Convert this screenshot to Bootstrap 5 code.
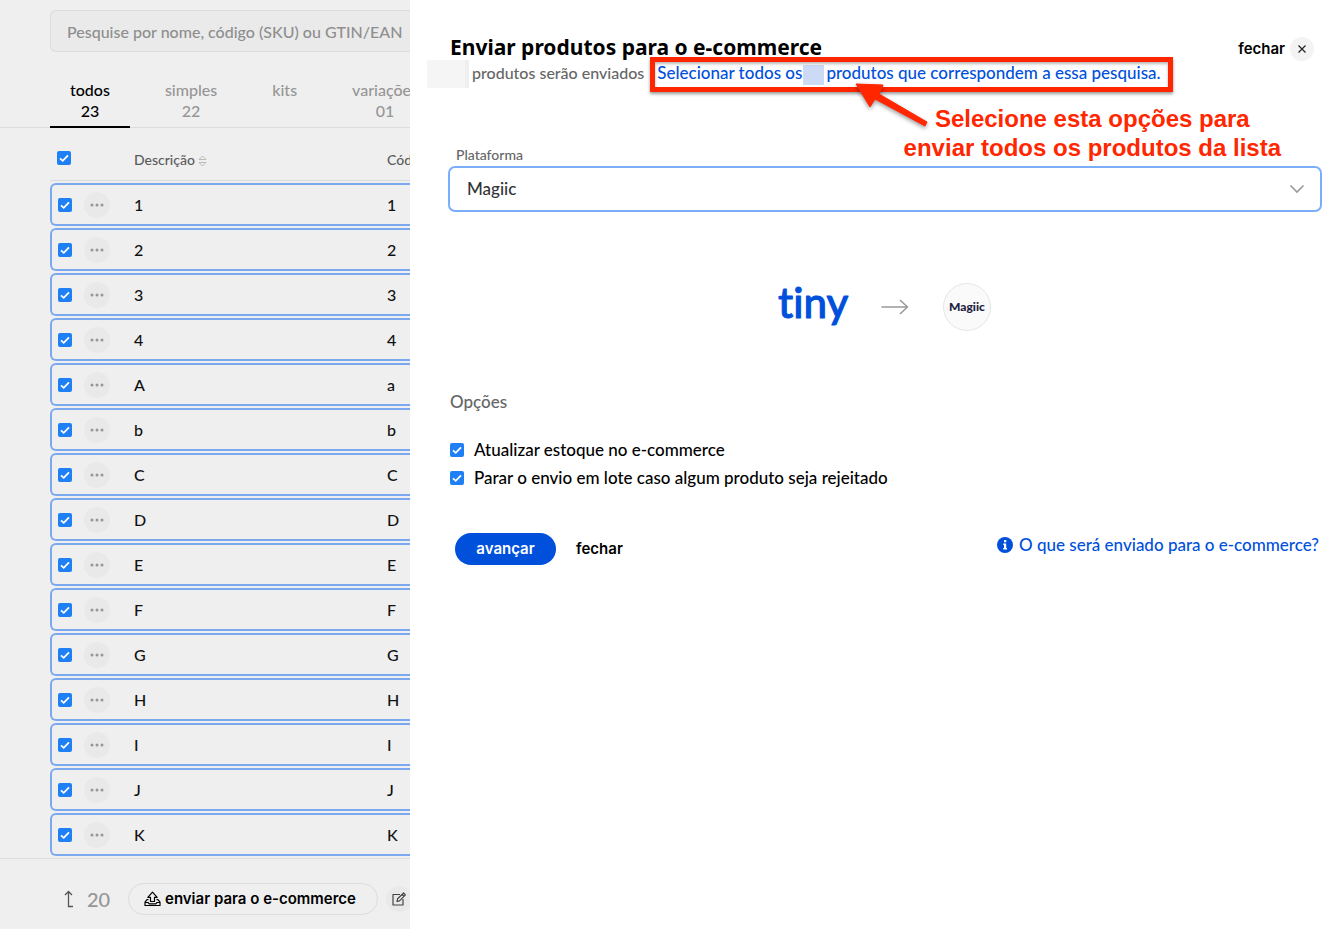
<!DOCTYPE html>
<html lang="pt-BR">
<head>
<meta charset="utf-8">
<meta name="viewport" content="width=device-width, initial-scale=1">
<title>Enviar produtos para o e-commerce</title>
<link href="https://cdn.jsdelivr.net/npm/bootstrap@5.3.0/dist/css/bootstrap.min.css" rel="stylesheet">
<style>
  body { font-family: Lato, "Open Sans", sans-serif; font-size: 17px; line-height: 24px; font-weight: 500; color: #000; }
  .app-shell { display: grid; grid-template-columns: 410fr 925fr; min-height: 100vh; }
  .brand-font { font-family: Inter, "Open Sans", sans-serif; font-weight: 600; font-size: 15px; line-height: 24px; }

  /* product list, behind the panel */
  .list-side { background: #efefef; overflow: hidden; white-space: nowrap; min-width: 0; }
  .search-area { padding: 10px 0 0 50px; }
  .search-box { height: 42px; padding: 0 0 0 16px; background: #eaeaea; border: 1px solid #dcdcdc; border-right: 0; border-radius: 6px 0 0 6px; font-size: 16px; font-weight: 500; }
  .search-box::placeholder { color: #8e8e8e; }
  .tab-strip { border-bottom: 1px solid #dcdcdc; padding-left: 50px; margin-top: 27px; gap: 15px; height: 49px; }
  .tab-strip .nav-link { color: #969696; font-size: 16px; line-height: 21px; padding: 0 20px; text-align: center; border-radius: 0; height: 49px; border-bottom: 2px solid transparent; }
  .tab-strip .nav-link.active { color: #000; border-bottom-color: #000; }

  .table-area { padding-left: 50px; }
  .product-table { table-layout: fixed; width: 100%; border-collapse: separate; border-spacing: 0 2px; font-size: 16px; }
  .product-table th { height: 51px; padding: 10px 0 0; border-bottom: 1px solid #dcdcdc; color: #5c5c5c; font-size: 14px; font-weight: 500; }
  .product-table td { height: 43px; padding: 0; border: solid #7ba9f0; border-width: 2px 0; color: #111; }
  .product-table td:first-child { border-left-width: 2px; border-radius: 6px 0 0 6px; padding-left: 6px; }
  .product-table th:first-child { padding: 6px 0 0 7px; }
  .col-check { width: 34px; } .col-menu { width: 50px; } .col-name { width: 253px; }

  .tick { appearance: none; flex: none; display: block; width: 14px; height: 14px; margin: 0; border-radius: 2px; background: #2080ff; }
  .tick:checked { background: #1f7ff5 url("data:image/svg+xml,%3Csvg xmlns='http://www.w3.org/2000/svg' viewBox='0 0 14 14'%3E%3Cpath d='M3 7.4l2.7 2.4L11 4.3' fill='none' stroke='%23fff' stroke-width='1.8'/%3E%3C/svg%3E"); }
  .round-btn { width: 26px; height: 26px; border: 0; border-radius: 50%; background: #e9e9e9; padding: 0; display: flex; align-items: center; justify-content: center; flex: none; }

  .action-bar { border-top: 1px solid #dcdcdc; padding: 24px 0 14px 62px; }
  .action-bar .round-btn { margin-left: 8px; }
  .selected-count { color: #969696; font-size: 20px; width: 41px; }
  .send-btn { height: 32px; width: 250px; border: 1px solid #dcdcdc; border-radius: 16px; background: transparent; padding: 0 6px 0 0; flex: none; }

  /* sending panel */
  .send-panel { padding: 35px 13px 20px 40px; background: #fff; min-width: 0; }
  .panel-head { height: 25px; }
  .panel-title { font-family: "Noto Sans", "Open Sans", sans-serif; font-weight: 700; font-size: 21px; line-height: 24px; margin: 0; }
  .close-btn { gap: 5px; margin: 2px 8px 0 0; }
  .close-mark { width: 24px; height: 24px; background: #f3f3f3; }
  .count-row { margin-left: -23px; height: 28px; color: #666; white-space: nowrap; }
  .hidden-count { width: 42px; height: 28px; background: #f5f5f5; border-right: 4px solid #efefef; margin-right: 3px; }
  .count-text { font-size: 16px; margin-top: 1px; }
  .link-blue { color: #0050dc; text-decoration: none; }
  .all-link { margin: 1px 0 0 13px; }
  .all-link::after { content: ""; position: absolute; inset: -4px -12px -7px -7px; border: 5px solid #ff2600; box-shadow: 0 2px 3px #0006, inset 0 2px 3px #0004; pointer-events: none; }
  .hidden-total { display: inline-block; width: 21px; height: 20px; background: #ccdaf5; vertical-align: middle; margin: 0 2px 0 1px; }
  .pointer-arrow { position: absolute; left: 195px; top: 8px; z-index: 2; filter: drop-shadow(0 2px 2px #0006); pointer-events: none; }
  .callout { font-family: "Liberation Sans", Arial, sans-serif; font-weight: 700; font-size: 24px; line-height: 29px; color: #ff2600; text-align: center; margin: 16px 41px 0 auto; width: max-content; }
  .hint-label { font-size: 14px; line-height: 20px; color: #666; margin: -17px 0 1px 6px; width: max-content; }
  .platform-select { height: 46px; border: 2px solid #7aaefb; border-radius: 7px; padding: 0 40px 0 17px; margin-left: -2px; width: calc(100% + 2px); font-size: 17px; font-weight: 500; color: #333;
    background-image: url("data:image/svg+xml,%3Csvg xmlns='http://www.w3.org/2000/svg' viewBox='0 0 16 16'%3E%3Cpath d='M1.5 4.5 8 11l6.500-6.500' fill='none' stroke='%23999' stroke-width='1.6'/%3E%3C/svg%3E"); background-position: right 15px center; background-size: 16px 16px; }
  .route { margin-top: 71px; gap: 34px; padding-right: 4px; }
  .logo-tiny text { font-family: Lato, sans-serif; font-weight: 500; font-size: 42px; font-variant-ligatures: none; }
  .section-label { color: #666; font-size: 17px; line-height: 24px; font-weight: 500; margin: 59px 0 24px; }
  .option-row { gap: 10px; }
  .panel-foot { margin: 43px 3px 0 5px; }
  .foot-buttons { gap: 20px; }
  .info-link { gap: 6px; }
  .go-btn { width: 101px; height: 32px; border: 0; border-radius: 16px; background: #0050dc; color: #fff; padding: 0; }
  .plain-btn { border: 0; background: none; padding: 0; color: #000; height: 24px; }
</style>
</head>
<body>
<svg class="d-none">
  <symbol id="dots" viewBox="0 0 14 4"><g fill="#969696"><circle cx="2" cy="2" r="1.500"/><circle cx="7" cy="2" r="1.500"/><circle cx="12" cy="2" r="1.500"/></g></symbol>
</svg>
<div class="app-shell">
  <section class="list-side d-flex flex-column" aria-label="Produtos">
    <div class="search-area"><input class="search-box w-100" type="text" aria-label="Pesquisar" placeholder="Pesquise por nome, código (SKU) ou GTIN/EAN"></div>
    <nav class="tab-strip nav flex-nowrap">
      <a class="nav-link active" href="#">todos<br>23</a>
      <a class="nav-link" href="#">simples<br>22</a>
      <a class="nav-link" href="#">kits</a>
      <a class="nav-link" href="#">variações<br>01</a>
    </nav>
    <div class="table-area flex-grow-1">
      <table class="product-table">
        <colgroup><col class="col-check"><col class="col-menu"><col class="col-name"><col></colgroup>
        <thead><tr>
          <th><input class="tick" type="checkbox" checked aria-label="Selecionar todos"></th><th></th>
          <th>Descrição <svg width="9" height="12" viewBox="0 0 9 12" fill="none" stroke="#bbb" stroke-linejoin="round"><path d="M1 4.500 4.500 1 8 4.500zM1 7.500 4.500 11 8 7.500z"/></svg></th>
          <th>Código</th>
        </tr></thead>
        <tbody id="products"></tbody>
      </table>
    </div>
    <footer class="action-bar d-flex align-items-center">
      <svg class="flex-shrink-0 me-2" width="17" height="18" viewBox="0 0 17 18" fill="none" stroke="#555" stroke-width="1.300"><path d="M3 5l3.500-3.500L10 5M6.500 1.500V16.500H11"/></svg>
      <span class="selected-count flex-shrink-0">20</span>
      <button class="send-btn brand-font d-flex align-items-center justify-content-center gap-1" type="button">
        <svg width="17" height="16" viewBox="0 0 17 16" fill="none" stroke="#000" stroke-width="1.200" stroke-linejoin="round"><path d="M8.500 1.200 3.800 6.300h2.700v4.200h4V6.300h2.700zM4.500 8.700H3L1 11.200v3.300h15v-3.300l-2-2.500h-1.500M1 11.500h3l1.200 1.300h6.600l1.200-1.300h3"/></svg>
        enviar para o e-commerce</button>
      <button class="round-btn" type="button" aria-label="Editar">
        <svg width="14" height="14" viewBox="0 0 14 14" fill="none" stroke="#444" stroke-width="1.200" stroke-linejoin="round"><path d="M8 2.500H1v10.500h10V7M5 9.500l.6-2.700 6-5.800 1.800 1.800-5.900 6zM10.200 2.500l1.700 1.700"/></svg>
      </button>
    </footer>
  </section>

  <main class="send-panel">
    <header class="panel-head d-flex justify-content-between align-items-start">
      <h1 class="panel-title">Enviar produtos para o e-commerce</h1>
      <button class="close-btn plain-btn brand-font d-flex align-items-center" type="button">fechar
        <span class="close-mark d-flex align-items-center justify-content-center rounded-circle"><svg width="10" height="10" viewBox="0 0 10 10" stroke="#222" stroke-width="1.200"><path d="M1.500 1.500l7 7m0-7-7 7"/></svg></span>
      </button>
    </header>
    <div class="count-row d-flex align-items-start">
      <span class="hidden-count"></span>
      <span class="count-text">produtos serão enviados</span>
      <span class="all-link position-relative">
        <a class="link-blue" href="#">Selecionar todos os<span class="hidden-total"></span>produtos que correspondem a essa pesquisa.</a>
        <svg class="pointer-arrow" width="80" height="60" viewBox="0 0 80 60"><path d="M4 15l27 1-4 9 48 28-2 4-50-27-5 8z" fill="#ff2600" stroke="#ff2600"/></svg>
      </span>
    </div>
    <p class="callout">Selecione esta opções para<br>enviar todos os produtos da lista</p>

    <label class="hint-label d-block" for="platform">Plataforma</label>
    <select class="platform-select form-select" id="platform"><option>Magiic</option></select>

    <div class="route d-flex justify-content-center align-items-center">
      <svg class="logo-tiny" width="70" height="48" viewBox="0 0 70 48" overflow="visible" role="img" aria-label="tiny"><text x="1" y="35" fill="#0050dc" stroke="#0050dc" stroke-linejoin="round">tiny</text></svg>
      <svg width="28" height="16" viewBox="0 0 28 16" fill="none" stroke="#999" stroke-width="1.600" stroke-linecap="round" stroke-linejoin="round"><path d="M1 8h25.500M19.500 1.500 26.500 8l-7 6.500"/></svg>
      <svg width="48" height="48" viewBox="0 0 48 48" role="img" aria-label="Magiic"><circle cx="24" cy="24" r="23.500" fill="#fafafa" stroke="#e6e6e6"/><text x="24" y="28" text-anchor="middle" font-family="Lato" font-weight="900" font-size="12" fill="#1c2240">Magiic</text></svg>
    </div>

    <h2 class="section-label">Opções</h2>
    <div class="d-flex flex-column gap-1">
      <label class="option-row d-flex align-items-center"><input class="tick" type="checkbox" checked>Atualizar estoque no e-commerce</label>
      <label class="option-row d-flex align-items-center"><input class="tick" type="checkbox" checked>Parar o envio em lote caso algum produto seja rejeitado</label>
    </div>
    <div class="panel-foot d-flex justify-content-between">
      <div class="foot-buttons d-flex align-items-center">
        <button class="go-btn brand-font" type="button">avançar</button>
        <button class="plain-btn brand-font" type="button">fechar</button>
      </div>
      <a class="info-link link-blue d-flex align-items-center align-self-start" href="#">
        <svg width="16" height="16" viewBox="0 0 16 16"><circle cx="8" cy="8" r="8" fill="#0050dc"/><path d="M7 3h2.300v2.200H7zM6.200 6.500h3v4.500h.8v1.500H6.200V11H7V8h-.8z" fill="#fff"/></svg>
        O que será enviado para o e-commerce?</a>
    </div>
  </main>
</div>
<script src="https://cdn.jsdelivr.net/npm/bootstrap@5.3.0/dist/js/bootstrap.bundle.min.js"></script>
<script>
  const items = [['1','1'],['2','2'],['3','3'],['4','4'],['A','a'],['b','b'],['C','C'],['D','D'],['E','E'],['F','F'],['G','G'],['H','H'],['I','I'],['J','J'],['K','K']];
  document.getElementById('products').innerHTML = items.map(([name, code]) => `<tr>
    <td><input class="tick" type="checkbox" checked aria-label="Selecionar ${name}"></td>
    <td><button class="round-btn" type="button" aria-label="Ações"><svg width="14" height="4"><use href="#dots"/></svg></button></td>
    <td>${name}</td><td>${code}</td></tr>`).join('');
</script>
</body>
</html>
